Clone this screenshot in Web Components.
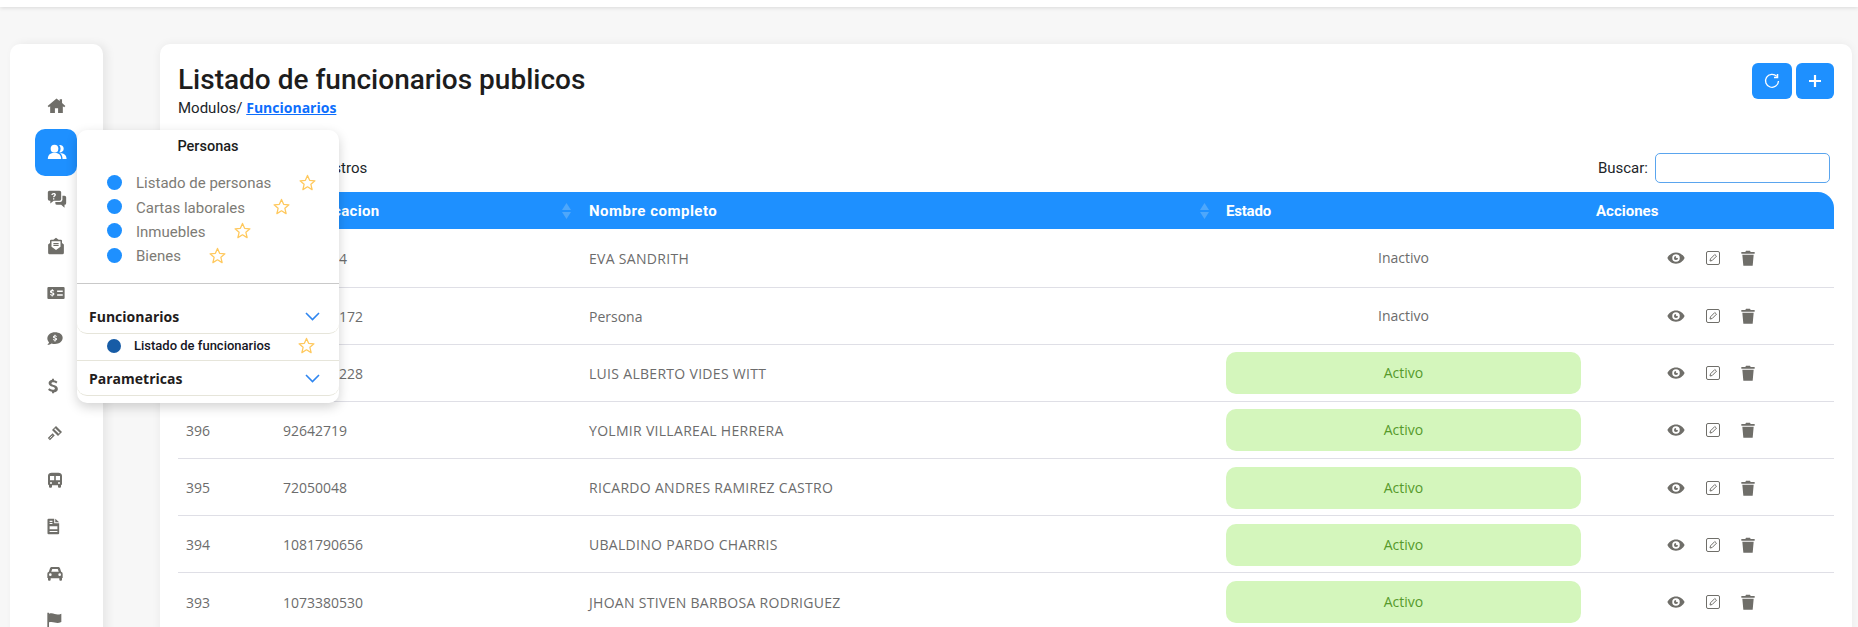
<!DOCTYPE html>
<html lang="es">
<head>
<meta charset="utf-8">
<title>Funcionarios</title>
<style>
  html, body { margin: 0; height: 627px; overflow: hidden; }
  body { background: #f7f7f7; font-family: Roboto, "Liberation Sans", sans-serif; }
</style>
</head>
<body>
<app-shell>
  <side-nav slot="nav"></side-nav>
  <module-menu slot="menu"></module-menu>
  <page-card title="Listado de funcionarios publicos">
    <funcionarios-table></funcionarios-table>
  </page-card>
</app-shell>

<script>
const GRAY = '#6f6e69';

const ICONS = {
  home: '<path d="M12 3 .8 12.6l1.5 1.6L4 12.8V21.5h6V15.5h4v6h6v-8.7l1.7 1.4 1.5-1.6L19 8.9V4.2h-3v2.2z"/>',
  users: '<circle cx="9" cy="8" r="4.6"/><path d="M1 20.500c0-5 3-7.600 8-7.600s8 2.600 8 7.600z"/><path d="M14.600 3.600a4.500 4.500 0 1 1 0 8.800 6.500 6.500 0 0 0 0-8.800zM18.600 20.500c0-3-.8-5.400-3-7.300 5 .1 7.900 2.800 7.900 7.300z"/>',
  chat: '<path fill-rule="evenodd" d="M3 2h12a2 2 0 0 1 2 2v8a2 2 0 0 1-2 2H8l-4 3.500V14H3a2 2 0 0 1-2-2V4a2 2 0 0 1 2-2zm5 2.800c-1.500 0-2.700.9-2.800 2.400h1.600c.1-.6.500-1 1.200-1 .6 0 1 .3 1 .8 0 .9-1.700 1-1.700 2.800h1.500c0-1.200 1.900-1.300 1.900-3 0-1.300-1.100-2-2.700-2zM7.200 11v1.500h1.600V11z"/><path d="M18.500 8H21a2 2 0 0 1 2 2v7a2 2 0 0 1-2 2v3.500L17 19h-5a2 2 0 0 1-2-2v-1.500h6a2.500 2.500 0 0 0 2.500-2.500z"/>',
  mail: '<path fill-rule="evenodd" d="M12 1 8.500 3.500H5.500a1.500 1.500 0 0 0-1.500 1.500v3L1.500 10v11a2 2 0 0 0 2 2h17a2 2 0 0 0 2-2V10L20 8V5a1.500 1.500 0 0 0-1.500-1.500h-3zM6 5.500h12v7.400l-6 4.300-6-4.300zM8.500 8v1.500h7V8zm0 2.500V12h7v-1.500z"/>',
  card: '<path fill-rule="evenodd" d="M2 4h20a1.500 1.500 0 0 1 1.500 1.500v13A1.500 1.500 0 0 1 22 20H2a1.500 1.500 0 0 1-1.500-1.500v-13A1.500 1.500 0 0 1 2 4zm11.500 4.500v2H21v-2zm0 5v2H21v-2zM6.400 6.800v1.300C4.900 8.300 4 9.100 4 10.300c0 2.400 3.700 1.600 3.700 3 0 .5-.5.800-1.100.8-.7 0-1.300-.3-1.800-.8l-.9 1.100c.6.600 1.500 1 2.400 1.100v1.200h1.300v-1.300c1.400-.2 2.300-1 2.300-2.200 0-2.500-3.700-1.700-3.700-3 0-.4.400-.7 1-.7.600 0 1.100.2 1.600.6l.8-1.100c-.5-.4-1.200-.8-2-.9V6.800z"/>',
  bubble: '<path fill-rule="evenodd" d="M12 2C5.600 2 .5 6.100.5 11.200c0 2.200 1 4.200 2.600 5.800-.6 2-2.600 4-2.600 4 2.800 0 5-1.200 6.300-2.200 1.600.5 3.400.8 5.200.8 6.400 0 11.500-4.100 11.500-9.300S18.400 2 12 2zm-.8 3.500h1.600v1.300c.8.100 1.500.4 2 .9l-.9 1.200c-.5-.4-1-.6-1.600-.6-.6 0-1 .2-1 .6 0 1.200 3.800.6 3.800 3.200 0 1.200-.9 2-2.300 2.200v1.400h-1.600v-1.300c-.9-.1-1.800-.5-2.400-1.200l1-1.100c.5.500 1.100.8 1.800.8.600 0 1.100-.2 1.100-.7 0-1.300-3.700-.6-3.700-3.100 0-1.200.9-2 2.200-2.200z"/>',
  dollar: '<path d="M10.600 1h2.800v2.500c2.200.2 4 1 5.300 2.200l-1.800 2.400c-1.200-1-2.700-1.600-4.300-1.600-1.800 0-2.900.7-2.900 1.800 0 3.100 9.600 1.500 9.600 8.100 0 2.900-2 4.700-5.900 5.200V23h-2.800v-2.400c-2.500-.3-4.600-1.300-6-2.800l1.900-2.400c1.300 1.300 3.100 2.200 5.100 2.200 1.900 0 3.300-.6 3.300-2 0-3.200-9.500-1.600-9.500-8 0-2.700 2-4.700 5.200-5.100z"/>',
  gavel: '<g fill="none" stroke-linecap="butt"><path d="M10.500 4.500 19.500 13.500" stroke="currentColor" stroke-width="8.500"/><path d="M11.500 5.500 18.500 12.500" stroke="#fff" stroke-width="2"/><path d="M10 14 2.800 21.200" stroke="currentColor" stroke-width="4.500"/><path d="M8 16 4 20" stroke="#fff" stroke-width="1.300"/></g>',
  bus: '<path fill-rule="evenodd" d="M7 1h10c3 0 5.500 1.500 5.500 4.500V18a2 2 0 0 1-1.500 1.900V22a1.500 1.500 0 0 1-1.500 1.500H18a1.500 1.500 0 0 1-1.500-1.500v-2h-9v2A1.500 1.500 0 0 1 6 23.500H4.500A1.500 1.500 0 0 1 3 22v-2.100A2 2 0 0 1 1.500 18V5.500C1.500 2.500 4 1 7 1zM4.500 6v6.500h6.300V6zm8.700 0v6.500h6.300V6zM6 15a1.500 1.500 0 1 0 0 3 1.500 1.500 0 0 0 0-3zm12 0a1.500 1.500 0 1 0 0 3 1.500 1.500 0 0 0 0-3z"/>',
  doc: '<path fill-rule="evenodd" d="M5 1h8v6.500h7V21.500a1.500 1.500 0 0 1-1.500 1.500h-13.500A1.500 1.500 0 0 1 3.500 21.500V2.500A1.500 1.500 0 0 1 5 1zM6.500 4v1.500h4V4zm0 3v1.500h4V7zm0 4.500V16h11v-4.500zM6.500 18.200v1.500h11v-1.500z"/><path d="M14.500 1 20 6h-5.500z"/>',
  car: '<path fill-rule="evenodd" d="M7.500 3h9c1.400 0 2.500.8 3 2l1.700 5A3 3 0 0 1 23.500 13v6.500h-1V22a1.500 1.500 0 0 1-1.500 1.500h-1A1.500 1.500 0 0 1 18.500 22v-2h-13v2A1.500 1.500 0 0 1 4 23.500H3A1.500 1.500 0 0 1 1.500 22v-2.500h-1V13a3 3 0 0 1 2.300-3l1.700-5c.5-1.200 1.600-2 3-2zm.4 3L6.400 10h11.200L16.100 6zM5 12.500a2 2 0 1 0 0 4 2 2 0 0 0 0-4zm14 0a2 2 0 1 0 0 4 2 2 0 0 0 0-4z"/>',
  flag: '<path d="M2 1h2.500v1.500C8 1.500 10.500 2 13 3c3 1 6 1.200 10-.5V15c-4 2-7 1.800-10 .8-3-1-5.500-1.200-8.500-.3V24H2z"/>',
  eye: '<path fill-rule="evenodd" d="M12 4.500C6.500 4.500 2.300 8 .5 12c1.800 4 6 7.500 11.500 7.500S21.700 16 23.500 12C21.700 8 17.500 4.500 12 4.500zM12 7a5 5 0 1 1 0 10 5 5 0 0 1 0-10zm.3 2.400a2.700 2.700 0 1 0 2.400 2.400 1.600 1.600 0 0 1-2.400-2.400z"/>',
  trash: '<path d="M9 1h6l1 2h6v2.500H2V3h6zM3.500 7h17L19 23.500H5z"/>'
};

function svgIcon(name, size, color) {
  return `<svg width="${size}" height="${size}" viewBox="0 0 24 24" fill="${color}" color="${color}" style="display:block">${ICONS[name]}</svg>`;
}

class AppShell extends HTMLElement {
  constructor() {
    super();
    this.attachShadow({ mode: 'open' });
    this.shadowRoot.innerHTML = `
      <style>
        :host { display: block; position: relative; height: 627px; overflow: hidden; }
        .topbar { height: 7px; background: #fff; box-shadow: 0 1px 4px rgba(0, 0, 0, .12); }
        .main { display: flex; gap: 57px; padding: 37px 6px 0 10px; }
        .main ::slotted(page-card) { flex: 1; min-width: 0; }
        .overlay { position: absolute; left: 77px; top: 130px; z-index: 5; }
      </style>
      <div class="topbar"></div>
      <div class="main">
        <slot name="nav"></slot>
        <slot></slot>
      </div>
      <div class="overlay"><slot name="menu"></slot></div>
    `;
  }
}

class SideNav extends HTMLElement {
  constructor() {
    super();
    this.attachShadow({ mode: 'open' });
    // name, size, left offset from the active box
    const items = [
      ['home', 19, 12], ['users', 20, 12], ['chat', 20, 12], ['mail', 18, 11.500],
      ['card', 18, 12], ['bubble', 16, 12], ['dollar', 16, 10], ['gavel', 16, 12],
      ['bus', 16, 12], ['doc', 17, 10], ['car', 16, 12], ['flag', 16, 11]
    ];
    this.shadowRoot.innerHTML = `
      <style>
        :host { display: block; width: 93px; height: 640px; background: #fff; border-radius: 10px; box-shadow: 4px 0 10px rgba(0, 0, 0, .07); }
        .list { display: flex; flex-direction: column; padding: 38px 26px 0 25px; }
        .item { height: 46.800px; display: flex; align-items: center; border-radius: 10px; }
        .item.active { background: #1e90ff; }
      </style>
      <div class="list">
        ${items.map(([name, size, left]) => `<div class="item ${name === 'users' ? 'active' : ''}" style="padding-left:${left}px">${svgIcon(name, size, name === 'users' ? '#fff' : GRAY)}</div>`).join('')}
      </div>
    `;
  }
}

const STAR = '<svg width="17" height="17" viewBox="0 0 24 24" fill="none" stroke="#ffc95e" stroke-width="1.800" stroke-linejoin="round" style="display:block"><path d="m12 2 3 6.900 7.500.7-5.700 5 1.700 7.400-6.500-3.900L5.500 22l1.700-7.400-5.700-5 7.500-.7z"/></svg>';
const CHEVRON = '<svg width="15" height="9" viewBox="0 0 15 9" fill="none" stroke="#2f86f0" stroke-width="1.600" style="display:block"><path d="m1 1 6.500 6.500L14 1"/></svg>';

class ModuleMenu extends HTMLElement {
  constructor() {
    super();
    this.attachShadow({ mode: 'open' });
    const personas = ['Listado de personas', 'Cartas laborales', 'Inmuebles', 'Bienes'];
    this.shadowRoot.innerHTML = `
      <style>
        :host { display: block; width: 262px; height: 273px; background: #fff; border-radius: 10px; box-shadow: 0 4px 12px rgba(0, 0, 0, .18); color: #212121; }
        .title { text-align: center; font-size: 14.500px; font-weight: 500; line-height: 18px; padding-top: 8px; color: #1c1c1c; }
        .group { padding: 14px 0 0 30px; height: 128px; box-sizing: border-box; border-bottom: 1px solid #c9c9c9; }
        .row { display: flex; align-items: center; height: 24.400px; color: #7d7b75; font-size: 15px; }
        .row .label { padding-top: 2px; }
        .dot { width: 15px; height: 15px; border-radius: 50%; background: #1e90ff; margin-right: 14px; flex: none; }
        .row .star { margin-left: 28px; }
        .section { display: flex; align-items: center; justify-content: space-between; padding: 0 19px 0 12px; font-family: "Open Sans", "Noto Sans", sans-serif; font-weight: 700; font-size: 14px; color: #231c1c; border-bottom: 1px solid #e6e5da; border-radius: 0 0 10px 10px; box-sizing: border-box; }
        .sub { display: flex; align-items: center; height: 27px; padding: 0 0 3px 30px; border-bottom: 1px solid #e6e5da; font-size: 13px; font-weight: 500; color: #15151f; box-sizing: border-box; }
        .sub .dot { width: 14px; height: 14px; background: #175ca6; margin-right: 13px; }
        .sub .star { margin-left: 27px; }
      </style>
      <div class="title">Personas</div>
      <div class="group">
        ${personas.map((text) => `<div class="row"><span class="dot"></span><span class="label">${text}</span><span class="star">${STAR}</span></div>`).join('')}
      </div>
      <div class="section" style="height:50px;padding-top:15px"><span>Funcionarios</span>${CHEVRON}</div>
      <div class="sub"><span class="dot"></span><span>Listado de funcionarios</span><span class="star">${STAR}</span></div>
      <div class="section" style="height:35px"><span>Parametricas</span>${CHEVRON}</div>
    `;
  }
}

class PageCard extends HTMLElement {
  constructor() {
    super();
    this.attachShadow({ mode: 'open' });
  }

  connectedCallback() {
    this.shadowRoot.innerHTML = `
      <style>
        :host { display: block; height: 640px; background: #fff; border-radius: 10px; box-shadow: 0 0 10px rgba(0, 0, 0, .06); box-sizing: border-box; padding: 19px 18px 0; }
        .head { display: flex; justify-content: space-between; align-items: flex-start; height: 90px; }
        h1 { margin: 0; font-size: 28px; font-weight: 500; line-height: 34px; color: #1d1d1d; }
        .crumb { font-size: 15px; line-height: 18px; color: #212529; margin-top: 2px; font-family: Roboto, sans-serif; }
        .crumb a { color: #0d6efd; font-family: "Open Sans", "Noto Sans", sans-serif; font-weight: 700; font-size: 14px; text-decoration: underline; }
        .btns { display: flex; gap: 4px; }
        .btn { height: 36px; background: #1e90ff; border-radius: 6px; display: flex; align-items: center; justify-content: center; }
        .toolbar { display: flex; justify-content: space-between; align-items: center; height: 30px; font-size: 15px; color: #212529; }
        .length { display: flex; align-items: center; gap: 6px; }
        .length select { width: 66px; height: 28px; border: 1px solid #ced4da; border-radius: 5px; background: #fff; }
        .search { display: flex; align-items: center; gap: 7px; padding-right: 4px; }
        .search input { width: 175px; height: 30px; box-sizing: border-box; border: 1px solid #5aa5ee; border-radius: 5px; background: #fff; outline: none; padding: 0; }
        .gap { height: 9px; }
      </style>
      <div class="head">
        <div>
          <h1>${this.getAttribute('title')}</h1>
          <div class="crumb">Modulos/ <a>Funcionarios</a></div>
        </div>
        <div class="btns">
          <div class="btn" style="width:40px">
            <svg width="18" height="18" viewBox="0 0 18 18" fill="none" stroke="#fff" stroke-width="1.300"><path d="M13.800 4.400a6.500 6.500 0 1 0 1.700 4.600"/><path d="M14.500 2v3.500H11" stroke-width="1.500"/></svg>
          </div>
          <div class="btn" style="width:38px">
            <svg width="14" height="14" viewBox="0 0 14 14" stroke="#fff" stroke-width="2.200"><path d="M7 1v12M1 7h12"/></svg>
          </div>
        </div>
      </div>
      <div class="toolbar">
        <div class="length"><span>Mostrar</span><select><option>10</option></select><span>registros</span></div>
        <div class="search"><label>Buscar:</label><input type="text"></div>
      </div>
      <div class="gap"></div>
      <slot></slot>
    `;
  }
}

class StatusPill extends HTMLElement {
  constructor() {
    super();
    this.attachShadow({ mode: 'open' });
    this.shadowRoot.innerHTML = `
      <style>
        :host { display: block; text-align: center; font-size: 14px; line-height: 42px; margin: 0 -1px; }
        :host([active]) { background: #d4f6bc; color: #569a2b; border-radius: 10px; }
        :host(:not([active])) { color: #6c6c6c; }
      </style>
      <slot></slot>
    `;
  }
}

class FuncionariosTable extends HTMLElement {
  constructor() {
    super();
    this.attachShadow({ mode: 'open' });
    const rows = [
      ['399', '12345674', 'EVA SANDRITH', false],
      ['398', '1234567172', 'Persona', false],
      ['397', '1045678228', 'LUIS ALBERTO VIDES WITT', true],
      ['396', '92642719', 'YOLMIR VILLAREAL HERRERA', true],
      ['395', '72050048', 'RICARDO ANDRES RAMIREZ CASTRO', true],
      ['394', '1081790656', 'UBALDINO PARDO CHARRIS', true],
      ['393', '1073380530', 'JHOAN STIVEN BARBOSA RODRIGUEZ', true]
    ];
    const arrows = '<svg class="sort" width="9" height="18" viewBox="0 0 9 18" fill="#4ea7fb"><path d="M4.500 1 9 8H0zM0 10h9l-4.500 7z"/></svg>';
    this.shadowRoot.innerHTML = `
      <style>
        :host { display: block; font-family: "Open Sans", "Noto Sans", sans-serif; font-size: 14px; color: #6c6c6c; }
        table { width: 100%; border-collapse: collapse; table-layout: fixed; }
        thead tr { background: #1e90ff; height: 37px; }
        th { color: #fff; font-family: Roboto, sans-serif; font-weight: 700; font-size: 15px; text-align: left; padding: 1px 8px 0; position: relative; }
        th:first-child { border-top-left-radius: 16px; }
        th:last-child { border-top-right-radius: 16px; }
        .wide { letter-spacing: .5px; }
        .mid { letter-spacing: .3px; }
        .tight { letter-spacing: -.2px; padding-left: 7px; }
        .sort { position: absolute; right: 10px; top: 10px; }
        td { padding: 1px 8px 0; height: 57.200px; box-sizing: border-box; border-bottom: 1px solid #dfdfe6; }
        tbody tr:first-child td { height: 58px; }
        .caps { letter-spacing: .3px; }
        .actions { display: flex; align-items: center; padding-left: 71px; }
        .edit { margin: 0 20px 0 21px; }
      </style>
      <table>
        <colgroup><col style="width:97px"><col style="width:306px"><col style="width:638px"><col style="width:369px"><col></colgroup>
        <thead>
          <tr><th>ID</th><th class="mid">Identificacion${arrows}</th><th class="wide">Nombre completo${arrows}</th><th class="tight">Estado</th><th>Acciones</th></tr>
        </thead>
        <tbody>
          ${rows.map((r) => `
            <tr>
              <td>${r[0]}</td><td>${r[1]}</td><td class="${r[2] === r[2].toUpperCase() ? 'caps' : ''}">${r[2]}</td>
              <td><status-pill ${r[3] ? 'active' : ''}>${r[3] ? 'Activo' : 'Inactivo'}</status-pill></td>
              <td><div class="actions">
                ${svgIcon('eye', 18, GRAY)}
                <svg class="edit" width="14" height="14" viewBox="0 0 14 14" fill="none" stroke="${GRAY}" stroke-width="1"><rect x=".5" y=".5" width="13" height="13" rx="1.500"/><path d="M4 10 4.500 7.800 8.800 3.500 10.500 5.200 6.200 9.500z"/></svg>
                ${svgIcon('trash', 16, GRAY)}
              </div></td>
            </tr>`).join('')}
        </tbody>
      </table>
    `;
  }
}

customElements.define('app-shell', AppShell);
customElements.define('side-nav', SideNav);
customElements.define('module-menu', ModuleMenu);
customElements.define('page-card', PageCard);
customElements.define('status-pill', StatusPill);
customElements.define('funcionarios-table', FuncionariosTable);
</script>
</body>
</html>
